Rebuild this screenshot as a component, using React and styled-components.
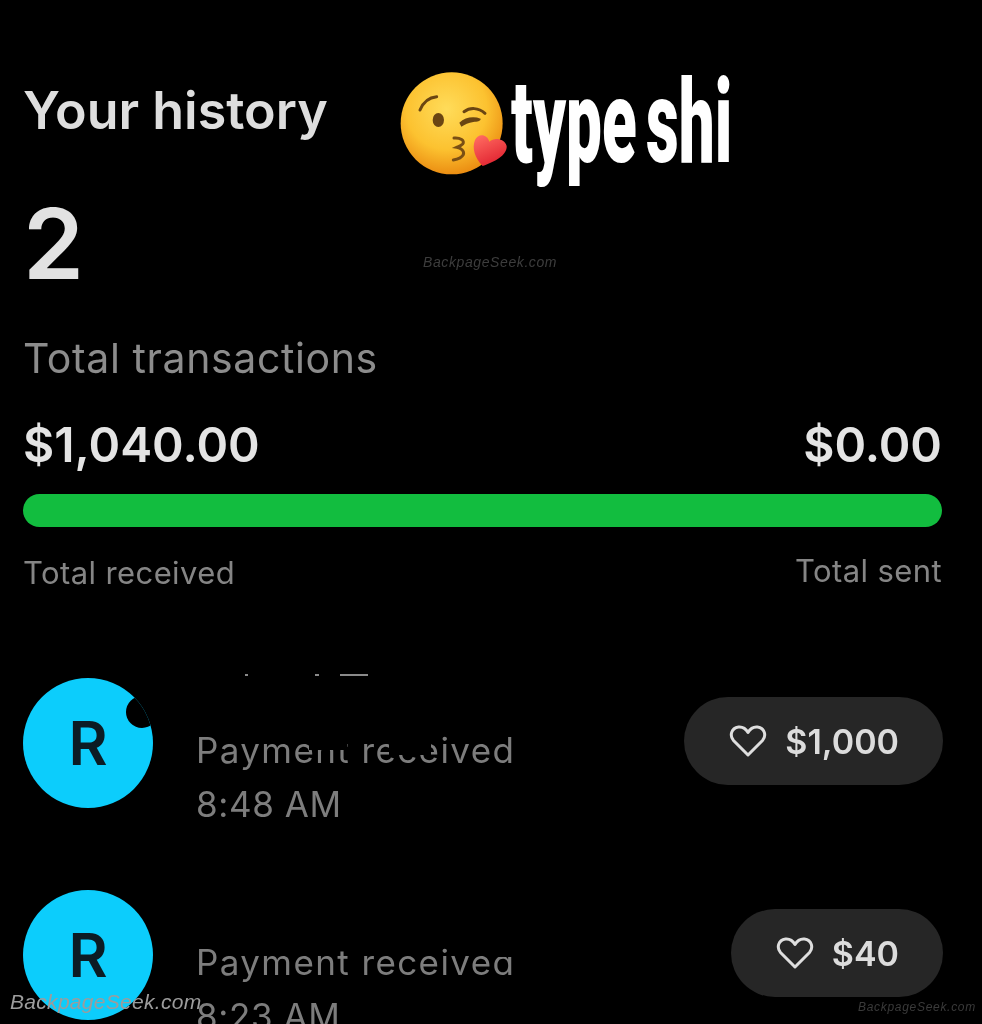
import React from "react";
import styled, { createGlobalStyle } from "styled-components";

const GlobalStyle = createGlobalStyle`
  html, body {
    margin: 0;
    padding: 0;
    background: #000;
  }
  body {
    font-family: "Inter", "Liberation Sans", sans-serif;
  }
`;

const Page = styled.div`
  position: relative;
  width: 982px;
  height: 1024px;
  overflow: hidden;
  background: #000;
  box-sizing: border-box;
  padding: 82px 40px 0 23px;
  filter: blur(0.5px);
`;

const Heading = styled.h1`
  margin: 0;
  font-size: 52px;
  line-height: 58px;
  font-weight: 600;
  color: #dedede;
`;

const Count = styled.div`
  margin-top: 54px;
  font-size: 98px;
  line-height: 100px;
  font-weight: 600;
  color: #e2e2e2;
`;

const Caption = styled.div`
  margin-top: 39px;
  font-size: 41px;
  line-height: 50px;
  font-weight: 400;
  letter-spacing: 0.6px;
  color: #8c8c8c;
`;

const Totals = styled.div`
  display: flex;
  justify-content: space-between;
  align-items: center;
  margin-top: 32px;
  font-size: 48px;
  line-height: 60px;
  font-weight: 600;
  color: #e4e4e4;
`;

const Bar = styled.div`
  height: 33px;
  margin-top: 19px;
  border-radius: 17px;
  background: #12bd3f;
`;

const Labels = styled.div`
  display: flex;
  justify-content: space-between;
  align-items: flex-start;
  margin-top: 26px;
  font-size: 31px;
  line-height: 40px;
  letter-spacing: 0.4px;
  color: #858585;
`;

const SentLabel = styled.span`
  margin-top: -2px;
`;

const Row = styled.div`
  display: flex;
  align-items: flex-start;
  margin-top: ${(p) => p.$gap}px;
`;

const Avatar = styled.div`
  position: relative;
  flex: none;
  width: 130px;
  height: 130px;
  border-radius: 50%;
  background: #0ccdfc;
  display: flex;
  align-items: center;
  justify-content: center;
  font-size: 60px;
  font-weight: 600;
  color: #0c1c24;
  overflow: hidden;
`;

// bite out of the avatar's top right edge
const Bite = styled.span`
  position: absolute;
  top: 18px;
  left: 103px;
  width: 32px;
  height: 32px;
  border-radius: 50%;
  background: #000;
`;

const RowText = styled.div`
  position: relative;
  margin-left: 43px;
  padding-top: 45px;
  font-size: 35px;
  line-height: 54px;
  letter-spacing: 0.6px;
  color: #7d7d7d;
`;

const RowLabel = styled.div`
  letter-spacing: 1.4px;
`;

// black patches laid over parts of the row text
const Scratch = styled.span`
  position: absolute;
  top: ${(p) => p.$top}px;
  left: ${(p) => p.$left}px;
  width: ${(p) => p.$width}px;
  height: ${(p) => p.$height}px;
  background: #000;
`;

const Crumb = styled.span`
  position: absolute;
  top: -4px;
  left: ${(p) => p.$left}px;
  width: ${(p) => p.$width}px;
  height: 2px;
  background: #8a8a8a;
`;

const Pill = styled.div`
  display: flex;
  align-items: center;
  gap: 18px;
  height: 88px;
  margin-left: auto;
  margin-right: -1px;
  margin-top: 19px;
  padding: 0 44px 0 45px;
  border-radius: 44px;
  background: #262626;
  font-size: 34px;
  font-weight: 600;
  color: #dcdcdc;
`;

const Sticker = styled.div`
  position: absolute;
  top: 71px;
  left: 399px;
`;

const StickerText = styled.span`
  position: absolute;
  top: -17px;
  left: 112px;
  font-family: "Roboto", "Liberation Sans", sans-serif;
  font-size: 116px;
  line-height: 136px;
  font-weight: 900;
  word-spacing: -12px;
  color: #fff;
  white-space: nowrap;
  transform: scaleX(0.55);
  transform-origin: left top;
`;

const Mark = styled.span`
  position: absolute;
  top: ${(p) => p.$top}px;
  left: ${(p) => p.$left}px;
  font-family: "Liberation Sans", sans-serif;
  font-style: italic;
  font-size: ${(p) => p.$size}px;
  letter-spacing: ${(p) => p.$spacing}px;
  color: ${(p) => p.$color};
  white-space: nowrap;
`;

const HeartIcon = () => (
  <svg width="38" height="32" viewBox="0 0 38 32" fill="none" stroke="#dedede" strokeWidth="3" strokeLinejoin="round">
    <path d="M19 30 L4.5 15.5 C0.5 11 2 3 9.5 2 C13.5 1.6 17 4 19 7.5 C21 4 24.5 1.6 28.5 2 C36 3 37.5 11 33.5 15.5 Z" />
  </svg>
);

const KissEmoji = () => (
  <svg width="110" height="106" viewBox="27 33 330 318" style={{ display: "block" }}>
    <defs>
      <radialGradient id="face" cx="45%" cy="36%" r="66%">
        <stop offset="0%" stopColor="#ffdc5a" />
        <stop offset="60%" stopColor="#fcc230" />
        <stop offset="100%" stopColor="#ea8a10" />
      </radialGradient>
      <linearGradient id="kiss" x1="0.2" y1="0" x2="0.7" y2="1">
        <stop offset="0%" stopColor="#ff6a60" />
        <stop offset="100%" stopColor="#df1f2e" />
      </linearGradient>
    </defs>
    <circle cx="185" cy="190" r="153" fill="url(#face)" />
    <path d="M90 150 C100 125 120 112 140 110" fill="none" stroke="#6a4512" strokeWidth="9" strokeLinecap="round" />
    <ellipse cx="145" cy="180" rx="17" ry="21" fill="#6a4512" />
    <path d="M222 155 C240 142 265 142 285 160" fill="none" stroke="#6a4512" strokeWidth="9" strokeLinecap="round" />
    <path d="M208 188 C225 172 250 168 272 176 C272 184 262 184 250 186 C236 188 224 194 214 200 Z" fill="#6a4512" />
    <path d="M192 234 C210 232 226 242 218 252 C212 258 204 260 200 262 C212 264 224 272 220 284 C214 296 202 298 190 300" fill="none" stroke="#7a4f14" strokeWidth="9" strokeLinecap="round" />
    <path d="M278 318 C255 295 245 265 255 240 C265 218 292 222 298 245 C315 230 345 238 350 258 C352 285 315 305 278 318 Z" fill="url(#kiss)" />
  </svg>
);

const Transaction = ({ gap, amount, time, bitten, children }) => (
  <Row $gap={gap}>
    <Avatar>
      R
      {bitten && <Bite />}
    </Avatar>
    <RowText>
      <RowLabel>Payment received</RowLabel>
      {time}
      {children}
    </RowText>
    <Pill>
      <HeartIcon />
      {amount}
    </Pill>
  </Row>
);

export default function App() {
  return (
    <>
      <GlobalStyle />
      <Page>
        <Heading>Your history</Heading>
        <Count>2</Count>
        <Caption>Total transactions</Caption>
        <Totals>
          <span>$1,040.00</span>
          <span>$0.00</span>
        </Totals>
        <Bar />
        <Labels>
          <span>Total received</span>
          <SentLabel>Total sent</SentLabel>
        </Labels>
        <Transaction gap={85} amount="$1,000" time="8:48 AM" bitten>
          <Crumb $left={49} $width={3} />
          <Crumb $left={119} $width={4} />
          <Crumb $left={144} $width={28} />
          <Scratch $top={20} $left={113} $width={38} $height={52} />
          <Scratch $top={20} $left={193} $width={42} $height={57} />
        </Transaction>
        <Transaction gap={59} amount="$40" time="8:23 AM">
          <Scratch $top={50} $left={290} $width={40} $height={17} />
        </Transaction>
        <Sticker>
          <KissEmoji />
          <StickerText>type shi</StickerText>
        </Sticker>
        <Mark $top={254} $left={423} $size={14} $spacing={0.6} $color="#3d3d3d">BackpageSeek.com</Mark>
        <Mark $top={990} $left={10} $size={21} $spacing={0.3} $color="#9c9c9c">BackpageSeek.com</Mark>
        <Mark $top={1000} $left={858} $size={12} $spacing={0.7} $color="#3a3a3a">BackpageSeek.com</Mark>
      </Page>
    </>
  );
}
